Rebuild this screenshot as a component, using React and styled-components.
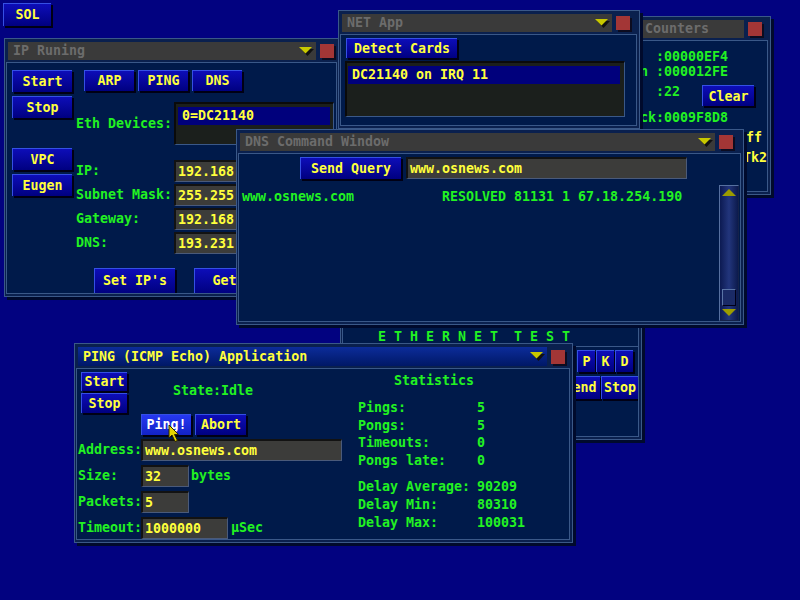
import React from "react";
import styled, { createGlobalStyle } from "styled-components";

const GREEN = "#22f222";
const YELLOW = "#ffff3c";
const EDGE = "#3a5888";
const PANEL = "#001a4a";

const GlobalStyle = createGlobalStyle`
  html, body { margin: 0; padding: 0; background: #020280; }
  body {
    font-family: "DejaVu Sans Mono", "Liberation Mono", monospace;
    font-size: 13.3px;
    font-weight: bold;
    line-height: 16px;
  }
`;

const Desktop = styled.div`
  position: relative;
  width: 800px;
  height: 600px;
  overflow: hidden;
  box-sizing: border-box;
  padding: 3px;
  background: #020280;
`;

/* ---------- window chrome ---------- */

const Frame = styled.div`
  position: absolute;
  left: ${(p) => p.$x}px;
  top: ${(p) => p.$y}px;
  width: ${(p) => p.$w}px;
  height: ${(p) => p.$h}px;
  box-sizing: border-box;
  display: flex;
  flex-direction: column;
  padding: 3px 2px 2px 1px;
  background: #0a204e;
  border: 1px solid ${EDGE};
  box-shadow: 3px 3px 0 #000a2c;
`;

const TitleRow = styled.div`
  flex: none;
  display: flex;
  align-items: center;
  gap: 4px;
  height: ${(p) => p.$h || 18}px;
  padding: 0 ${(p) => p.$pr}px 0 2px;
`;

const TitleBar = styled.div`
  flex: 1;
  height: 100%;
  box-sizing: border-box;
  display: flex;
  align-items: center;
  justify-content: space-between;
  padding: 0 2px 0 5px;
  white-space: pre;
  color: ${(p) => (p.$active ? YELLOW : "#6c6c6c")};
  background: ${(p) =>
    p.$active ? "linear-gradient(#0c2c9a, #001866)" : "#3a3a3a"};
`;

const CloseBox = styled.div`
  flex: none;
  width: 14px;
  height: 14px;
  background: #a33636;
  box-shadow: 2px 2px 0 #0c0c20;
`;

const Body = styled.div`
  flex: 1;
  min-height: 0;
  box-sizing: border-box;
  margin-top: ${(p) => (p.$bare ? 0 : 2)}px;
  padding: ${(p) => p.$pad || "0"};
  border: 1px solid ${EDGE};
  background: ${PANEL};
  color: ${GREEN};
  overflow: hidden;
`;

const DropArrow = () => (
  <svg width="15" height="9" viewBox="0 0 15 9">
    <polygon points="2,2 15,2 8.5,9" fill="#111111" />
    <polygon points="0,0 13,0 6.5,6.5" fill="#c8c800" />
  </svg>
);

const Win = ({ x, y, w, h, title, active, noMenu, pr = 3, pad, children }) => (
  <Frame $x={x} $y={y} $w={w} $h={h}>
    {title && (
      <TitleRow $pr={pr} $h={active ? 19 : 18}>
        <TitleBar $active={active}>
          <span>{title}</span>
          {!noMenu && <DropArrow />}
        </TitleBar>
        <CloseBox />
      </TitleRow>
    )}
    <Body $pad={pad} $bare={!title}>
      {children}
    </Body>
  </Frame>
);

/* ---------- controls ---------- */

const Btn = styled.button`
  box-sizing: border-box;
  flex: none;
  width: ${(p) => p.$w}px;
  height: ${(p) => p.$h || 22}px;
  margin-top: ${(p) => p.$mt || 0}px;
  padding: 0;
  display: flex;
  align-items: center;
  justify-content: center;
  font: inherit;
  white-space: pre;
  color: ${(p) => (p.$hot ? "#ffffff" : YELLOW)};
  background: ${(p) =>
    p.$hot
      ? "linear-gradient(#2638f2, #1222c6)"
      : "linear-gradient(#0d0db8, #000080)"};
  border: 0;
  border-top: 1px solid #3550e4;
  border-left: 1px solid #3550e4;
  box-shadow: 2px 2px 0 #000014;
`;

const Field = styled.div`
  box-sizing: border-box;
  width: ${(p) => p.$w}px;
  height: 22px;
  display: flex;
  align-items: center;
  padding-left: 2px;
  color: ${YELLOW};
  background: #3c3c3a;
  border-top: 2px solid #121212;
  border-left: 2px solid #121212;
  border-bottom: 1px solid #4a5a7a;
  border-right: 1px solid #4a5a7a;
  white-space: pre;
  overflow: hidden;
`;

const ListBox = styled.div`
  box-sizing: border-box;
  width: ${(p) => p.$w}px;
  height: ${(p) => p.$h}px;
  margin: ${(p) => p.$m || 0};
  padding: ${(p) => p.$pad};
  background: #1b1f1c;
  border-top: 2px solid #0a0a0a;
  border-left: 2px solid #0a0a0a;
  border-bottom: 1px solid ${EDGE};
  border-right: 1px solid ${EDGE};
`;

const ListItem = styled.div`
  height: 18px;
  display: flex;
  align-items: center;
  padding-left: 4px;
  color: ${YELLOW};
  background: #00007c;
  white-space: pre;
`;

const Label = styled.span`
  color: ${GREEN};
  white-space: pre;
`;

const Yellow = styled.span`
  color: ${YELLOW};
  white-space: pre;
`;

/* ---------- IP Runing ---------- */

const IpLayout = styled.div`
  display: flex;
  gap: 4px;
  padding: 7px 0 0 5px;
`;

const SideStack = styled.div`
  display: flex;
  flex-direction: column;
  gap: 4px;
`;

const IpMain = styled.div`
  display: flex;
  flex-direction: column;
`;

const ProtoRow = styled.div`
  display: flex;
  gap: 4px;
  margin-left: 8px;
`;

const DeviceRow = styled.div`
  display: grid;
  grid-template-columns: 98px 160px;
  align-items: center;
  margin-top: 11px;
`;

const AddrGrid = styled.div`
  display: grid;
  grid-template-columns: 98px 120px;
  align-items: center;
  row-gap: 2px;
  margin-top: 15px;
`;

const ApplyRow = styled.div`
  display: flex;
  gap: 19px;
  margin: 14px 0 0 18px;
`;

const IpWindow = () => (
  <Win x={4} y={38} w={336} h={259} title="IP Runing">
    <IpLayout>
      <SideStack>
        <Btn $w={60}>Start</Btn>
        <Btn $w={60}>Stop</Btn>
        <Btn $w={60} $mt={26}>VPC</Btn>
        <Btn $w={60}>Eugen</Btn>
      </SideStack>
      <IpMain>
        <ProtoRow>
          <Btn $w={50} $h={21}>ARP</Btn>
          <Btn $w={50} $h={21}>PING</Btn>
          <Btn $w={50} $h={21}>DNS</Btn>
        </ProtoRow>
        <DeviceRow>
          <Label>Eth Devices:</Label>
          <ListBox $w={160} $h={43} $pad="3px 3px 0 2px">
            <ListItem>0=DC21140</ListItem>
          </ListBox>
        </DeviceRow>
        <AddrGrid>
          <Label>IP:</Label>
          <Field $w={120}>192.168.1.20</Field>
          <Label>Subnet Mask:</Label>
          <Field $w={120}>255.255.255.0</Field>
          <Label>Gateway:</Label>
          <Field $w={120}>192.168.1.1</Field>
          <Label>DNS:</Label>
          <Field $w={120}>193.231.236.25</Field>
        </AddrGrid>
        <ApplyRow>
          <Btn $w={81} $h={25}>Set IP's</Btn>
          <Btn $w={60} $h={25}>Get</Btn>
        </ApplyRow>
      </IpMain>
    </IpLayout>
  </Win>
);

/* ---------- NET App ---------- */

const NetWindow = () => (
  <Win x={338} y={10} w={302} h={119} title="NET App" pr={7} pad="3px 0 0 5px">
    <Btn $w={111} $h={20}>Detect Cards</Btn>
    <ListBox $w={280} $h={56} $m="3px 0 0 -1px" $pad="3px 4px 0 1px">
      <ListItem>DC21140 on IRQ 11</ListItem>
    </ListBox>
  </Win>
);

/* ---------- Counters ---------- */

const CountRow = styled.div`
  display: flex;
  align-items: flex-start;
  justify-content: ${(p) => (p.$end ? "flex-end" : "flex-start")};
  margin: ${(p) => p.$mt || 0}px ${(p) => p.$mr || 0}px 0 0;
  line-height: 15px;
  white-space: pre;
`;

const ClearBtn = styled(Btn)`
  margin-left: 22px;
  margin-top: 1px;
`;

const CountersWindow = () => (
  <Win
    x={580}
    y={16}
    w={191}
    h={179}
    title="Packet Counters"
    noMenu
    pr={6}
    pad="8px 0 0 9px"
  >
    <CountRow>Sent    :00000EF4</CountRow>
    <CountRow>Recv In :000012FE</CountRow>
    <CountRow $mt={5}>
      IRQ     :22
      <ClearBtn $w={52} $h={21}>Clear</ClearBtn>
    </CountRow>
    <CountRow $mt={4}>TimeTick:0009F8D8</CountRow>
    <CountRow $mt={5} $end $mr={5}>
      <Yellow>Off</Yellow>
    </CountRow>
    <CountRow $mt={5} $end>
      <Yellow>Tk1 Tk2</Yellow>
    </CountRow>
  </Win>
);

/* ---------- DNS Command Window ---------- */

const DnsLayout = styled.div`
  display: grid;
  grid-template-columns: 1fr 20px;
  height: 100%;
`;

const QueryRow = styled.div`
  display: flex;
  gap: 5px;
  margin-left: 58px;
`;

const ResultRow = styled.div`
  display: flex;
  margin-top: 10px;
  white-space: pre;
`;

const ResultHost = styled.span`
  width: 200px;
  flex: none;
`;

const ScrollBar = styled.div`
  box-sizing: border-box;
  width: 20px;
  height: 136px;
  margin-top: 28px;
  display: flex;
  flex-direction: column;
  align-items: center;
  padding: 3px 0;
  border: 1px solid #5670a0;
  border-right-color: #14224a;
  border-bottom-color: #14224a;
  background: linear-gradient(90deg, #0c1a52, #22357c 50%, #0c1a4c);
`;

const ScrollTrack = styled.div`
  flex: 1;
  width: 100%;
  display: flex;
  flex-direction: column;
  justify-content: flex-end;
  align-items: center;
  padding-bottom: 3px;
`;

const Thumb = styled.div`
  box-sizing: border-box;
  width: 14px;
  height: 17px;
  background: #1a2a66;
  border: 1px solid #5a74a6;
  border-right-color: #000018;
  border-bottom-color: #000018;
`;

const ScrollArrow = ({ down }) => (
  <svg width="14" height="8" viewBox="0 0 14 8">
    <polygon
      points={down ? "0,0 14,0 7,7" : "7,0 14,7 0,7"}
      fill="#9c9c00"
    />
  </svg>
);

const DnsWindow = () => (
  <Win x={236} y={129} w={508} h={196} title="DNS Command Window" pr={8} pad="3px 1px 0 3px">
    <DnsLayout>
      <div>
        <QueryRow>
          <Btn $w={101}>Send Query</Btn>
          <Field $w={281}>www.osnews.com</Field>
        </QueryRow>
        <ResultRow>
          <ResultHost>www.osnews.com</ResultHost>
          <span>RESOLVED 81131 1 67.18.254.190</span>
        </ResultRow>
      </div>
      <ScrollBar>
        <ScrollArrow />
        <ScrollTrack>
          <Thumb />
        </ScrollTrack>
        <ScrollArrow down />
      </ScrollBar>
    </DnsLayout>
  </Win>
);

/* ---------- Ethernet test ---------- */

const EthHeader = styled.div`
  height: 18px;
  display: flex;
  align-items: center;
  padding-left: 35px;
  border-bottom: 1px solid ${EDGE};
  white-space: pre;
`;

const KeyRow = styled.div`
  display: flex;
  justify-content: flex-end;
  gap: ${(p) => p.$gap}px;
  margin-top: ${(p) => p.$mt}px;
  padding-right: ${(p) => p.$pr}px;
`;

const EthWindow = () => (
  <Win x={340} y={323} w={302} h={117}>
    <EthHeader>E T H E R N E T  T E S T</EthHeader>
    <KeyRow $gap={1} $mt={3} $pr={5}>
      <Btn $w={18}>P</Btn>
      <Btn $w={18}>K</Btn>
      <Btn $w={18}>D</Btn>
    </KeyRow>
    <KeyRow $gap={1} $mt={4} $pr={0}>
      <Btn $w={40} $h={23}>Send</Btn>
      <Btn $w={37} $h={23}>Stop</Btn>
    </KeyRow>
  </Win>
);

/* ---------- PING ---------- */

const PingLayout = styled.div`
  display: grid;
  grid-template-columns: 280px 1fr;
`;

const PingLeft = styled.div`
  display: flex;
  flex-direction: column;
`;

const PingTop = styled.div`
  display: flex;
  align-items: center;
`;

const StartStack = styled.div`
  display: flex;
  flex-direction: column;
  gap: 2px;
  margin-left: 3px;
`;

const StateText = styled.span`
  margin: 0 0 4px 46px;
  white-space: pre;
`;

const PingActions = styled.div`
  display: flex;
  gap: 4px;
  margin: 1px 0 0 63px;
`;

const PingForm = styled.div`
  display: grid;
  grid-template-columns: 63px auto;
  row-gap: 4px;
  align-items: center;
  margin-top: 4px;
`;

const FieldWithUnit = styled.div`
  display: flex;
  align-items: center;
  gap: ${(p) => p.$gap}px;
  white-space: pre;
`;

const StatsTitle = styled.div`
  margin: 1px 0 0 36px;
`;

const StatsGrid = styled.div`
  display: grid;
  grid-template-columns: 119px auto;
  margin-top: ${(p) => p.$mt}px;
  line-height: ${(p) => p.$lh}px;
  white-space: pre;
`;

const PingWindow = () => (
  <Win
    x={74}
    y={343}
    w={499}
    h={200}
    title="PING (ICMP Echo) Application"
    active
    pr={5}
    pad="3px 0 0 1px"
  >
    <PingLayout>
      <PingLeft>
        <PingTop>
          <StartStack>
            <Btn $w={46} $h={19}>Start</Btn>
            <Btn $w={46} $h={20}>Stop</Btn>
          </StartStack>
          <StateText>State:Idle</StateText>
        </PingTop>
        <PingActions>
          <Btn $w={50} $h={21} $hot>Ping!</Btn>
          <Btn $w={51} $h={21}>Abort</Btn>
        </PingActions>
        <PingForm>
          <Label>Address:</Label>
          <Field $w={201}>www.osnews.com</Field>
          <Label>Size:</Label>
          <FieldWithUnit $gap={2}>
            <Field $w={48}>32</Field>
            bytes
          </FieldWithUnit>
          <Label>Packets:</Label>
          <Field $w={48}>5</Field>
          <Label>Timeout:</Label>
          <FieldWithUnit $gap={3}>
            <Field $w={87}>1000000</Field>
            µSec
          </FieldWithUnit>
        </PingForm>
      </PingLeft>
      <div>
        <StatsTitle>Statistics</StatsTitle>
        <StatsGrid $mt={10} $lh={17.7}>
          <span>Pings:</span>
          <span>5</span>
          <span>Pongs:</span>
          <span>5</span>
          <span>Timeouts:</span>
          <span>0</span>
          <span>Pongs late:</span>
          <span>0</span>
        </StatsGrid>
        <StatsGrid $mt={8} $lh={18}>
          <span>Delay Average:</span>
          <span>90209</span>
          <span>Delay Min:</span>
          <span>80310</span>
          <span>Delay Max:</span>
          <span>100031</span>
        </StatsGrid>
      </div>
    </PingLayout>
  </Win>
);

/* ---------- mouse pointer ---------- */

const Pointer = styled.div`
  position: absolute;
  left: 168px;
  top: 424px;
  line-height: 0;
`;

const Cursor = () => (
  <Pointer>
    <svg width="12" height="19" viewBox="0 0 12 19">
      <path
        d="M1 1 L1 14 L4 11 L7 17.5 L9.5 16.5 L6.5 10.5 L10.5 10.5 Z"
        fill="#e6d400"
        stroke="#2a2400"
        strokeWidth="1"
      />
    </svg>
  </Pointer>
);

export default function App() {
  return (
    <>
      <GlobalStyle />
      <Desktop>
        <Btn $w={48} $h={23}>SOL</Btn>
        <CountersWindow />
        <IpWindow />
        <NetWindow />
        <EthWindow />
        <DnsWindow />
        <PingWindow />
        <Cursor />
      </Desktop>
    </>
  );
}
